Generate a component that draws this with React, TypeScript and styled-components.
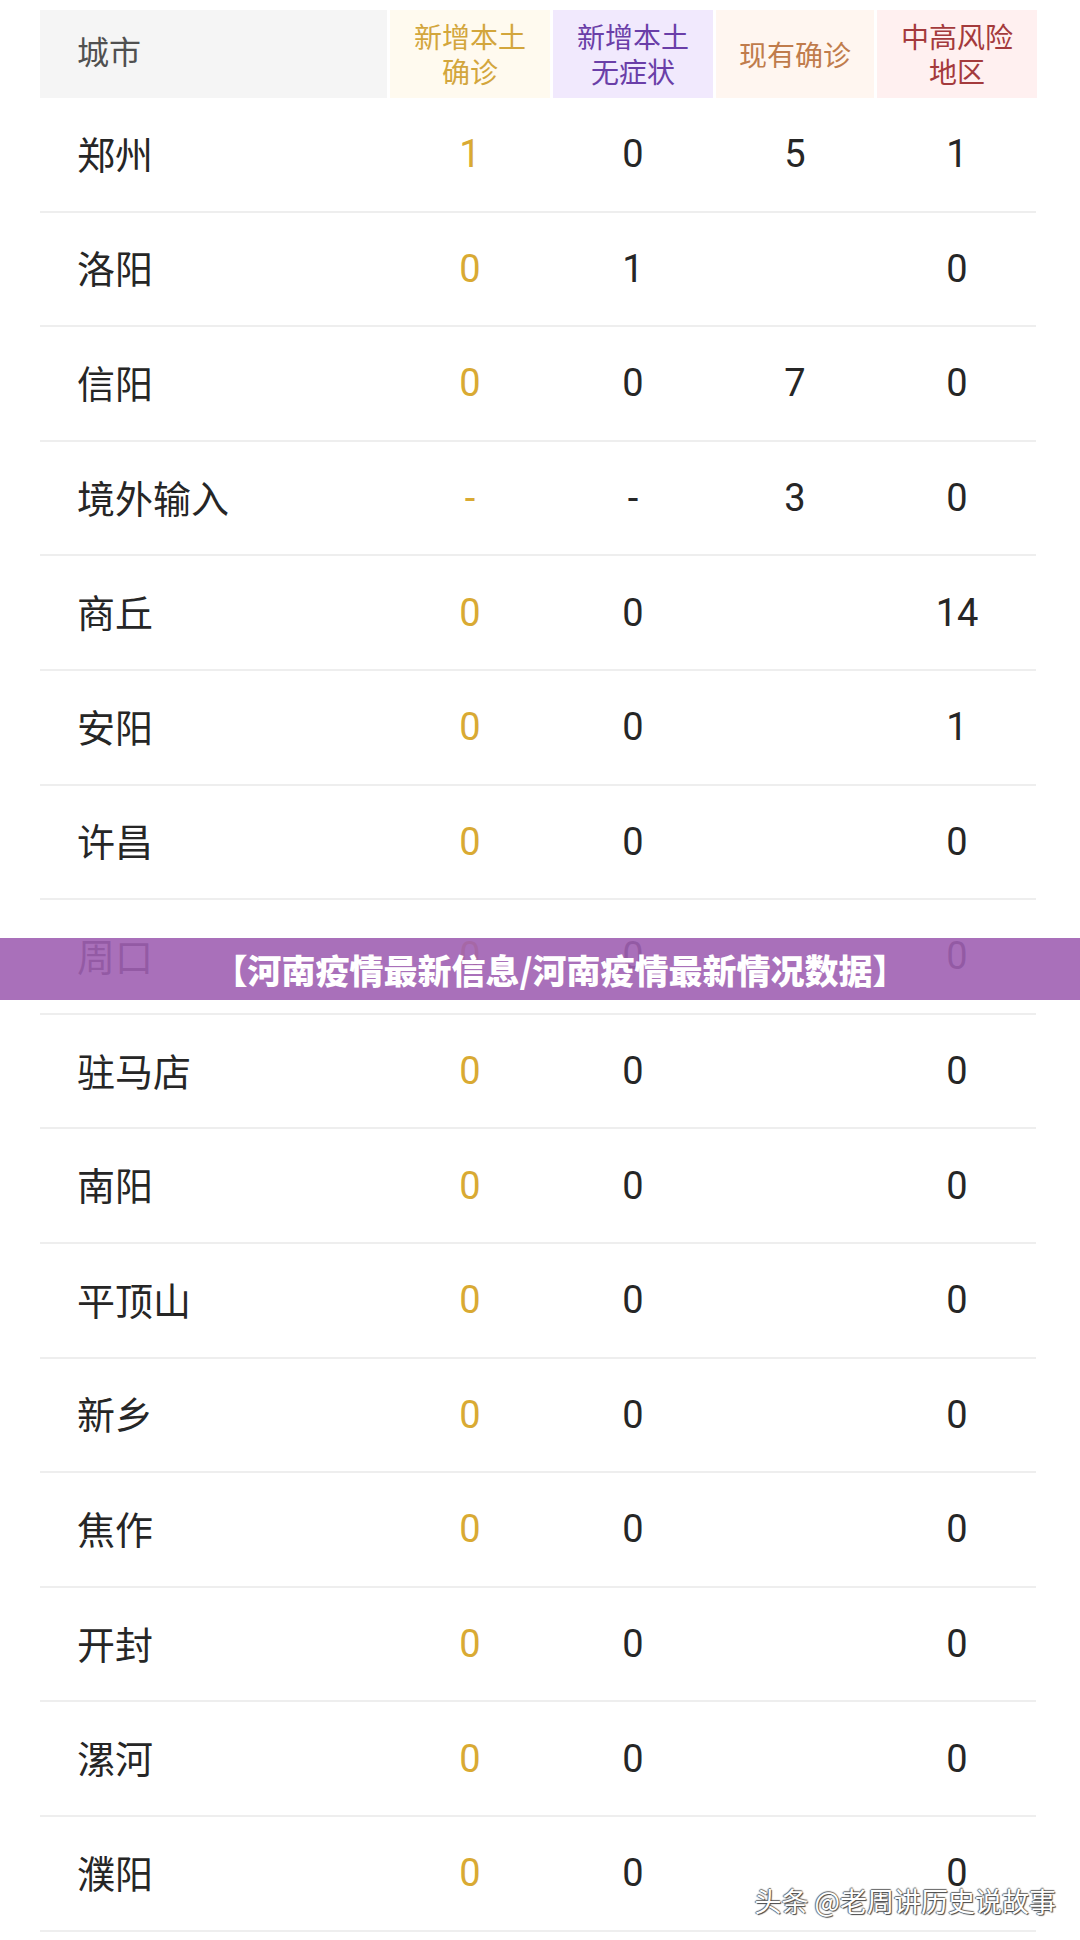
import React from 'react';
import styled, { createGlobalStyle } from 'styled-components';

const GlobalStyle = createGlobalStyle`
  html, body {
    margin: 0;
    padding: 0;
    background: #ffffff;
  }
  body {
    font-family: Roboto, "Noto Sans CJK SC", sans-serif;
  }
`;

const Page = styled.div`
  position: relative;
  width: 1080px;
  height: 1940px;
  overflow: hidden;
  background: #ffffff;
`;

const Table = styled.div`
  width: 996px;
  padding: 10px 0 0 40px;
`;

const columns = '347px 160px 160px 158px 160px';

const HeaderRow = styled.div`
  display: grid;
  grid-template-columns: ${columns};
  column-gap: 3px;
  height: 88px;
`;

type Tone = 'grey' | 'gold' | 'purple' | 'peach' | 'red';

const tones: Record<Tone, { bg: string; fg: string }> = {
  grey: { bg: '#f5f5f5', fg: '#505050' },
  gold: { bg: '#fffaef', fg: '#d3a63c' },
  purple: { bg: '#f1e9fd', fg: '#6a3ea8' },
  peach: { bg: '#fff6f0', fg: '#c07c4c' },
  red: { bg: '#fff0f0', fg: '#a43a3c' },
};

const HeadCell = styled.div<{ tone: Tone; left?: boolean }>`
  display: flex;
  flex-direction: column;
  align-items: ${p => (p.left ? 'flex-start' : 'center')};
  justify-content: center;
  padding-left: ${p => (p.left ? '37px' : '0')};
  padding-bottom: ${p => (p.left ? '8px' : '0')};
  background: ${p => tones[p.tone].bg};
  color: ${p => tones[p.tone].fg};
  font-family: "Noto Sans CJK SC", sans-serif;
  font-size: ${p => (p.left ? '32px' : '28px')};
  line-height: 35px;
`;

const Row = styled.div`
  display: grid;
  grid-template-columns: ${columns};
  column-gap: 3px;
  height: 114.6px;
  box-sizing: border-box;
  border-bottom: 2px solid #eeeeee;
  align-items: center;
`;

const City = styled.div`
  padding-left: 37px;
  padding-bottom: 4px;
  font-family: "Noto Sans CJK SC", sans-serif;
  font-size: 38px;
  color: #262626;
`;

const Num = styled.div<{ gold?: boolean }>`
  text-align: center;
  font-family: Roboto, "Noto Sans CJK SC", sans-serif;
  font-size: 38px;
  color: ${p => (p.gold ? '#d9aa33' : '#262626')};
`;

const Banner = styled.div`
  position: absolute;
  left: 0;
  top: 938px;
  width: 100%;
  height: 62px;
  background: rgba(160, 96, 178, 0.9);
  display: flex;
  align-items: center;
  justify-content: center;
  padding-left: 40px;
  box-sizing: border-box;
  color: #ffffff;
  font-family: "Noto Sans CJK SC", sans-serif;
  font-weight: 900;
  font-size: 34px;
`;

const Watermark = styled.div`
  position: absolute;
  right: 24px;
  top: 1881px;
  color: #ffffff;
  font-family: "Noto Sans CJK SC", sans-serif;
  font-size: 27px;
  text-shadow: 1px 1px 1px #444, -1px 0 1px #666, 0 -1px 1px #666;
`;

const rows: [string, string, string, string, string][] = [
  ['郑州', '1', '0', '5', '1'],
  ['洛阳', '0', '1', '', '0'],
  ['信阳', '0', '0', '7', '0'],
  ['境外输入', '-', '-', '3', '0'],
  ['商丘', '0', '0', '', '14'],
  ['安阳', '0', '0', '', '1'],
  ['许昌', '0', '0', '', '0'],
  ['周口', '0', '0', '', '0'],
  ['驻马店', '0', '0', '', '0'],
  ['南阳', '0', '0', '', '0'],
  ['平顶山', '0', '0', '', '0'],
  ['新乡', '0', '0', '', '0'],
  ['焦作', '0', '0', '', '0'],
  ['开封', '0', '0', '', '0'],
  ['漯河', '0', '0', '', '0'],
  ['濮阳', '0', '0', '', '0'],
];

const App: React.FC = () => {
  return (
    <Page>
      <GlobalStyle />
      <Table>
        <HeaderRow>
          <HeadCell tone="grey" left>城市</HeadCell>
          <HeadCell tone="gold"><span>新增本土</span><span>确诊</span></HeadCell>
          <HeadCell tone="purple"><span>新增本土</span><span>无症状</span></HeadCell>
          <HeadCell tone="peach">现有确诊</HeadCell>
          <HeadCell tone="red"><span>中高风险</span><span>地区</span></HeadCell>
        </HeaderRow>
        {rows.map(([city, a, b, c, d]) => (
          <Row key={city}>
            <City>{city}</City>
            <Num gold>{a}</Num>
            <Num>{b}</Num>
            <Num>{c}</Num>
            <Num>{d}</Num>
          </Row>
        ))}
      </Table>
      <Banner>【河南疫情最新信息/河南疫情最新情况数据】</Banner>
      <Watermark>头条 @老周讲历史说故事</Watermark>
    </Page>
  );
};

export default App;
